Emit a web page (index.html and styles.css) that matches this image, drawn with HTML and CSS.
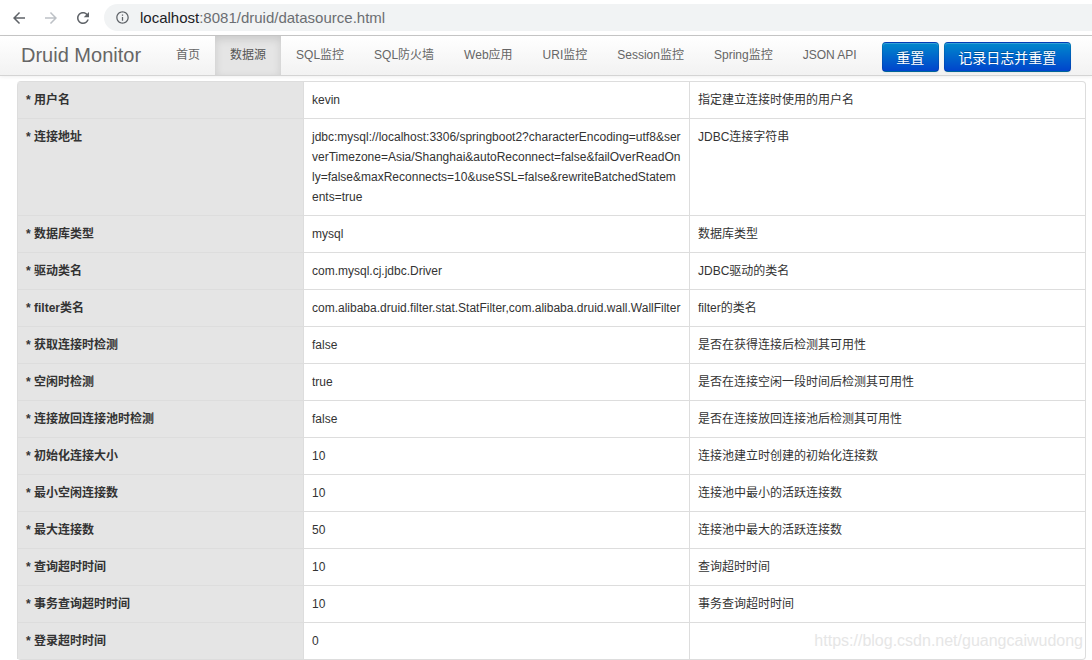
FILE: index.html
```html
<!DOCTYPE html>
<html lang="zh-CN">
<head>
<meta charset="utf-8">
<title>Druid Monitor</title>
<link rel="stylesheet" href="styles.css">
</head>
<body>
<div class="chrome">
  <svg class="cicon back" viewBox="0 0 24 24" width="18" height="18"><path d="M20 11H7.83l5.59-5.59L12 4l-8 8 8 8 1.41-1.41L7.83 13H20v-2z"/></svg>
  <svg class="cicon fwd" viewBox="0 0 24 24" width="18" height="18"><path d="M4 11h12.17l-5.59-5.59L12 4l8 8-8 8-1.41-1.41L16.17 13H4v-2z"/></svg>
  <svg class="cicon reload" viewBox="0 0 24 24" width="18" height="18"><path d="M17.65 6.35C16.2 4.9 14.21 4 12 4c-4.42 0-7.99 3.58-7.99 8s3.57 8 7.99 8c3.73 0 6.84-2.55 7.73-6h-2.08c-.82 2.33-3.04 4-5.65 4-3.310 0-6-2.69-6-6s2.69-6 6-6c1.66 0 3.14.69 4.22 1.78L13 11h7V4l-2.35 2.35z"/></svg>
  <div class="omnibox">
    <svg class="info" viewBox="0 0 24 24" width="15" height="15"><path d="M11 7h2v2h-2zm0 4h2v6h-2zm1-9C6.48 2 2 6.48 2 12s4.48 10 10 10 10-4.48 10-10S17.52 2 12 2zm0 18c-4.41 0-8-3.59-8-8s3.590-8 8-8 8 3.59 8 8-3.59 8-8 8z"/></svg>
    <span class="url"><span class="host">localhost</span>:8081/druid/datasource.html</span>
  </div>
</div>

<div class="navbar">
  <a class="brand">Druid Monitor</a>
  <ul class="nav">
    <li><a>首页</a></li>
    <li class="active"><a>数据源</a></li>
    <li><a>SQL监控</a></li>
    <li><a>SQL防火墙</a></li>
    <li><a>Web应用</a></li>
    <li><a>URI监控</a></li>
    <li><a>Session监控</a></li>
    <li><a>Spring监控</a></li>
    <li><a>JSON API</a></li>
  </ul>
  <div class="actions">
    <button class="btn">重置</button>
    <button class="btn">记录日志并重置</button>
  </div>
</div>

<table class="ds">
  <colgroup><col class="c1"><col class="c2"><col class="c3"></colgroup>
  <tbody>
    <tr><td class="lbl">* 用户名</td><td>kevin</td><td>指定建立连接时使用的用户名</td></tr>
    <tr><td class="lbl">* 连接地址</td><td class="wrap">jdbc:mysql://localhost:3306/springboot2?characterEncoding=utf8&amp;serverTimezone=Asia/Shanghai&amp;autoReconnect=false&amp;failOverReadOnly=false&amp;maxReconnects=10&amp;useSSL=false&amp;rewriteBatchedStatements=true</td><td>JDBC连接字符串</td></tr>
    <tr><td class="lbl">* 数据库类型</td><td>mysql</td><td>数据库类型</td></tr>
    <tr><td class="lbl">* 驱动类名</td><td>com.mysql.cj.jdbc.Driver</td><td>JDBC驱动的类名</td></tr>
    <tr><td class="lbl">* filter类名</td><td>com.alibaba.druid.filter.stat.StatFilter,com.alibaba.druid.wall.WallFilter</td><td>filter的类名</td></tr>
    <tr><td class="lbl">* 获取连接时检测</td><td>false</td><td>是否在获得连接后检测其可用性</td></tr>
    <tr><td class="lbl">* 空闲时检测</td><td>true</td><td>是否在连接空闲一段时间后检测其可用性</td></tr>
    <tr><td class="lbl">* 连接放回连接池时检测</td><td>false</td><td>是否在连接放回连接池后检测其可用性</td></tr>
    <tr><td class="lbl">* 初始化连接大小</td><td>10</td><td>连接池建立时创建的初始化连接数</td></tr>
    <tr><td class="lbl">* 最小空闲连接数</td><td>10</td><td>连接池中最小的活跃连接数</td></tr>
    <tr><td class="lbl">* 最大连接数</td><td>50</td><td>连接池中最大的活跃连接数</td></tr>
    <tr><td class="lbl">* 查询超时时间</td><td>10</td><td>查询超时时间</td></tr>
    <tr><td class="lbl">* 事务查询超时时间</td><td>10</td><td>事务查询超时时间</td></tr>
    <tr><td class="lbl">* 登录超时时间</td><td>0</td><td></td></tr>
  </tbody>
</table>

<div class="watermark">https://blog.csdn.net/guangcaiwudong</div>
</body>
</html>
```

FILE: styles.css
```css
html, body {
  margin: 0;
  padding: 0;
  background: #fff;
  font-family: "Liberation Sans", Arial, "Noto Sans CJK SC", sans-serif;
  color: #333;
  overflow: hidden;
}

/* browser chrome */
.chrome {
  height: 35px;
  border-bottom: 1px solid #c8c8c8;
  background: #fff;
  display: flex;
  align-items: center;
  padding-left: 10px;
}
.cicon {
  fill: #5f6368;
  margin-right: 14px;
}
.cicon.fwd { fill: #bdc1c6; }
.cicon.reload { margin-right: 12px; }
.omnibox {
  flex: 1;
  height: 27px;
  background: #f1f3f4;
  border-radius: 14px 0 0 14px;
  display: flex;
  align-items: center;
  padding-left: 11px;
}
.info {
  fill: #5f6368;
  margin-right: 10px;
}
.url {
  font-family: "Liberation Sans", Arial, sans-serif;
  font-size: 15px;
  color: #6b6e72;
}
.url .host { color: #202124; }

/* navbar */
.navbar {
  height: 39px;
  border-bottom: 1px solid #d4d4d4;
  background: linear-gradient(to bottom, #ffffff, #f2f2f2);
  box-shadow: 0 1px 4px rgba(0,0,0,0.065);
  display: flex;
  align-items: stretch;
}
.brand {
  padding: 0 20px 0 21px;
  font-size: 20px;
  line-height: 39px;
  color: #666;
  font-weight: normal;
}
.nav {
  list-style: none;
  margin: 0;
  padding: 0;
  display: flex;
}
.nav li a {
  display: block;
  padding: 0 15px;
  line-height: 39px;
  font-size: 12px;
  color: #666;
}
.nav li.active a {
  background: #e5e5e5;
  color: #555;
  box-shadow: inset 0 3px 8px rgba(0,0,0,0.125);
}
.actions {
  display: flex;
  gap: 5px;
  margin-left: 10px;
  align-self: flex-start;
  margin-top: 6px;
}
.btn {
  height: 30px;
  padding: 0 13.5px;
  font-family: "Liberation Sans", Arial, "Noto Sans CJK SC", sans-serif;
  font-size: 14px;
  color: #fff;
  background: linear-gradient(to bottom, #0088cc, #0044cc);
  border: 1px solid;
  border-color: rgba(0,0,0,0.1) rgba(0,0,0,0.1) rgba(0,0,0,0.25);
  border-radius: 4px;
  box-shadow: inset 0 1px 0 rgba(255,255,255,0.2), 0 1px 2px rgba(0,0,0,0.05);
  text-shadow: 0 -1px 0 rgba(0,0,0,0.25);
}

/* table */
.ds {
  margin: 5px 0 0 17px;
  width: 1068px;
  table-layout: fixed;
  border-collapse: separate;
  border-spacing: 0;
  border: 1px solid #ddd;
  border-left: 0;
  border-radius: 4px;
  font-size: 12px;
  line-height: 20px;
  color: #333;
}
.ds col.c1 { width: 286px; }
.ds col.c2 { width: 386px; }
.ds col.c3 { width: 396px; }
.ds td {
  padding: 8px;
  border-left: 1px solid #ddd;
  border-top: 1px solid #ddd;
  vertical-align: top;
  text-align: left;
}
.ds tr:first-child td { border-top: 0; }
.ds tr:first-child td:first-child { border-top-left-radius: 4px; }
.ds tr:first-child td:last-child { border-top-right-radius: 4px; }
.ds td.lbl {
  background: #e5e5e5;
  font-weight: bold;
}
.ds td.wrap { word-break: break-all; }

.watermark {
  position: absolute;
  right: 9px;
  top: 632px;
  font-size: 16px;
  color: #e6e6e6;
  font-family: "Liberation Sans", Arial, sans-serif;
}
```
